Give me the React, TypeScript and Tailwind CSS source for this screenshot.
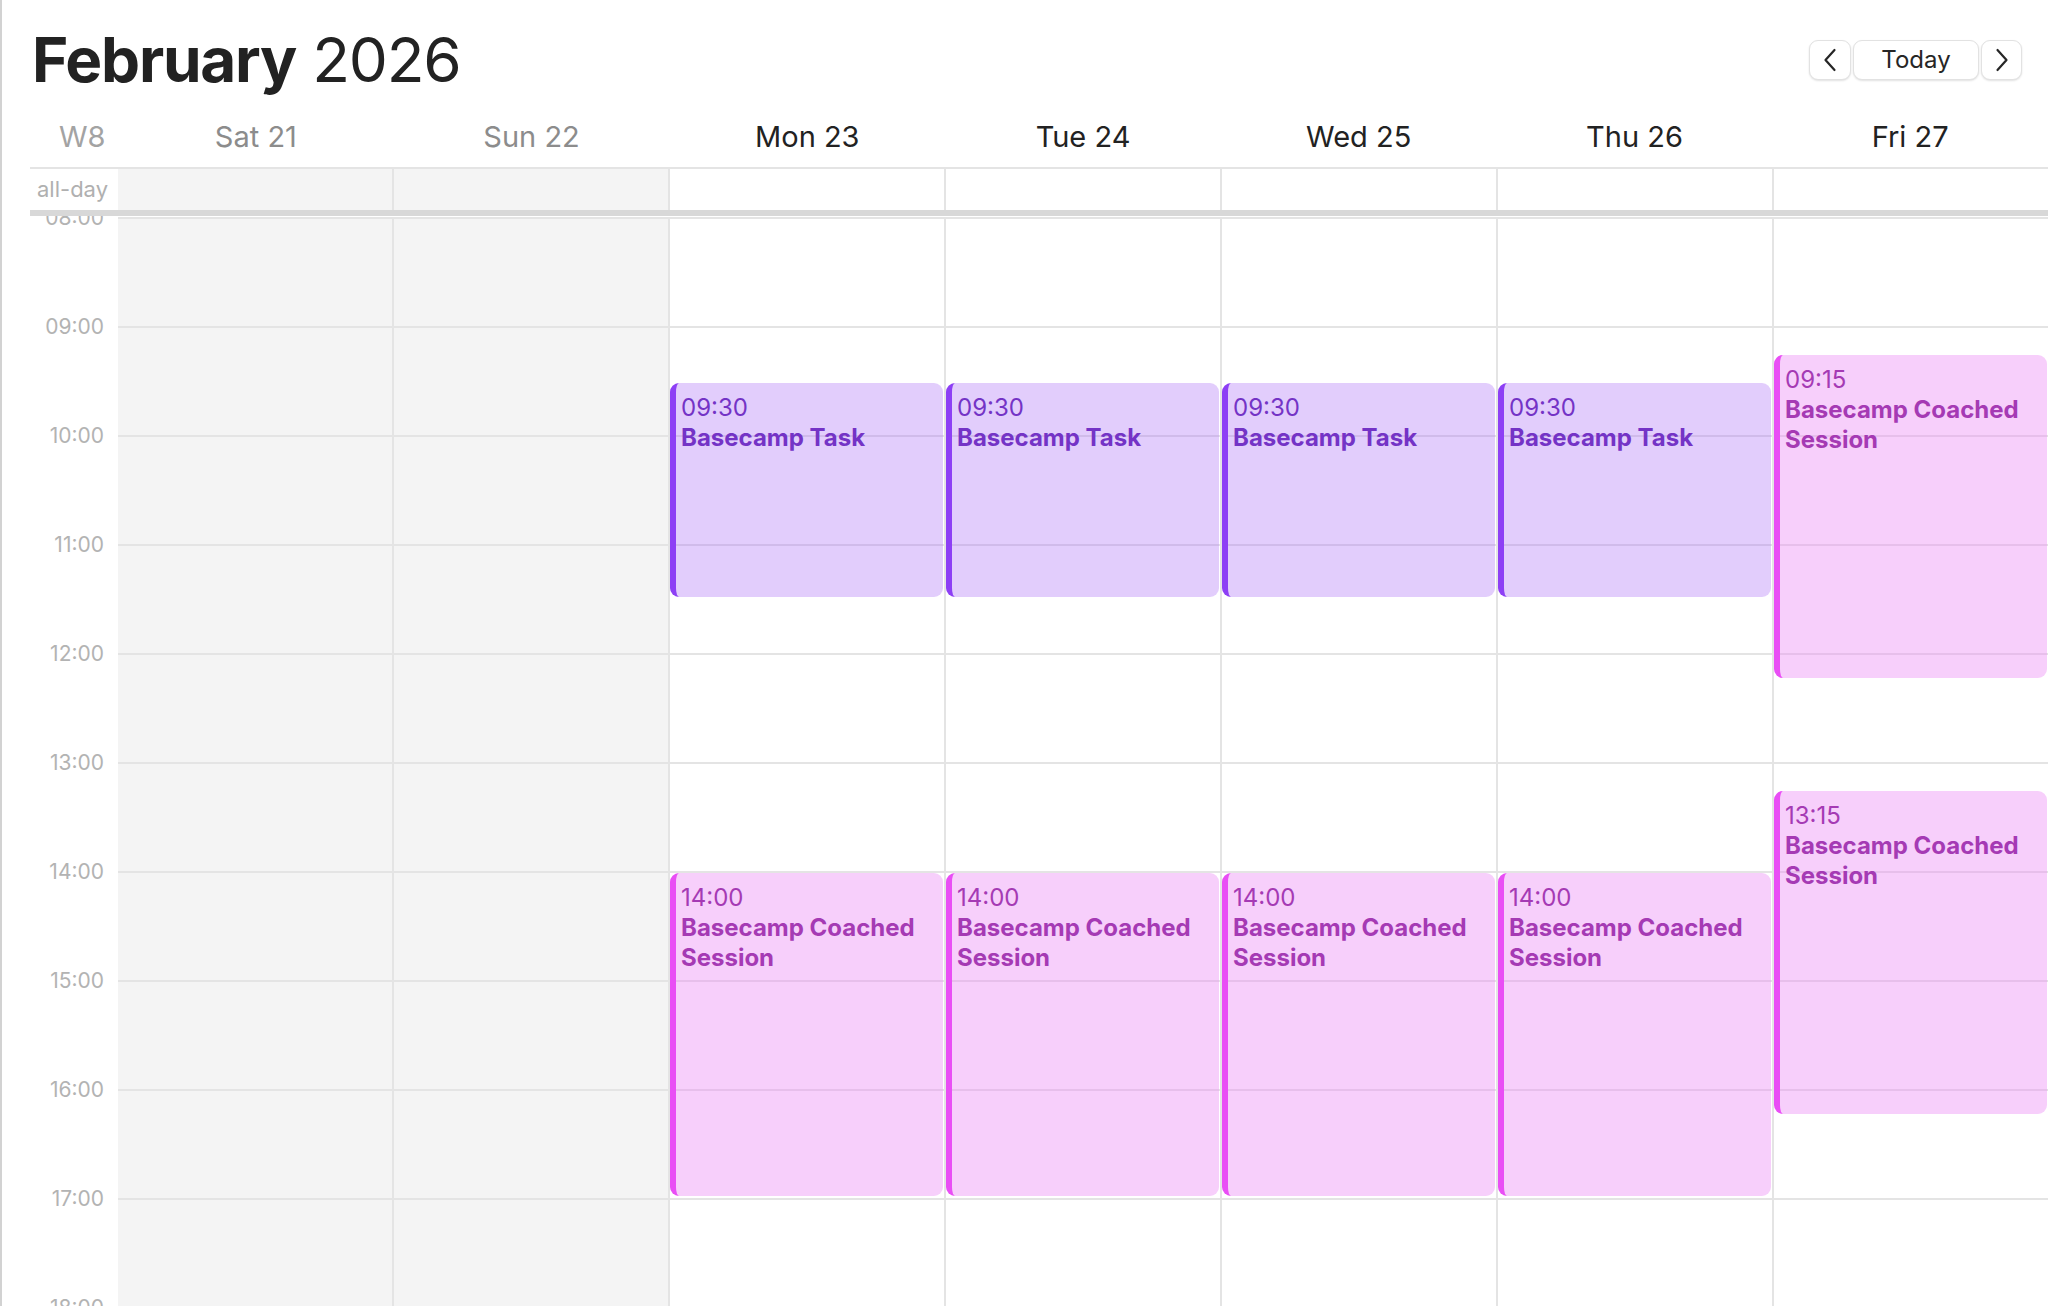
import React from 'react';

type CalEvent = { start: number; end: number; label: string; title: string; kind: 'task' | 'session' };

const HOUR = 109;
const FIRST = 8;
const HOURS = [8, 9, 10, 11, 12, 13, 14, 15, 16, 17, 18];

const task = (): CalEvent => ({ start: 9.5, end: 11.5, label: '09:30', title: 'Basecamp Task', kind: 'task' });
const session = (start: number, label: string): CalEvent => ({
  start,
  end: start + 3,
  label,
  title: 'Basecamp Coached Session',
  kind: 'session',
});

const days = [
  { name: 'Sat 21', weekend: true, events: [] as CalEvent[] },
  { name: 'Sun 22', weekend: true, events: [] as CalEvent[] },
  { name: 'Mon 23', weekend: false, events: [task(), session(14, '14:00')] },
  { name: 'Tue 24', weekend: false, events: [task(), session(14, '14:00')] },
  { name: 'Wed 25', weekend: false, events: [task(), session(14, '14:00')] },
  { name: 'Thu 26', weekend: false, events: [task(), session(14, '14:00')] },
  { name: 'Fri 27', weekend: false, events: [session(9.25, '09:15'), session(13.25, '13:15')] },
];

const tone = {
  task: 'bg-[#ad70f5]/35 border-[#8d3ff5] text-[#7433c6]',
  session: 'bg-[#ec8cf6]/42 border-[#e94ef5] text-[#a53ab4]',
};

const EventBlock: React.FC<{ ev: CalEvent }> = ({ ev }) => {
  const top = (ev.start - FIRST) * HOUR + 2;
  const height = (ev.end - ev.start) * HOUR - 4;
  return (
    <div
      className={`absolute left-0 right-[1px] rounded-[9px] border-l-[6px] pl-[5px] pt-[10px] pr-2 text-[24px] leading-[30px] overflow-hidden ${tone[ev.kind]}`}
      style={{ top, height }}
    >
      <div className="font-normal">{ev.label}</div>
      <div className="font-bold">{ev.title}</div>
    </div>
  );
};

const NavButton: React.FC<{ children: React.ReactNode; className?: string }> = ({ children, className }) => (
  <button
    className={`h-[40px] rounded-[9px] border border-[#e2e2e2] bg-white shadow-[0_1px_2px_rgba(0,0,0,0.12)] flex items-center justify-center text-[#262626] ${className ?? ''}`}
  >
    {children}
  </button>
);

const Chevron: React.FC<{ dir: 'left' | 'right' }> = ({ dir }) => (
  <svg width="14" height="24" viewBox="0 0 14 24" fill="none" stroke="#262626" strokeWidth="2.2" strokeLinecap="round" strokeLinejoin="round">
    {dir === 'left' ? <path d="M11.5 2 L2.5 12 L11.5 22" /> : <path d="M2.5 2 L11.5 12 L2.5 22" />}
  </svg>
);

export default function App() {
  return (
    <div className="w-[2048px] h-[1306px] overflow-hidden bg-white border-l-2 border-[#d2d2d2] font-['Inter','Liberation_Sans',sans-serif] flex flex-col">
      <div className="pl-[28px]">
        <div className="h-[119px] pt-[29px] flex items-start justify-between pr-[26px]">
          <h1 className="text-[62px] leading-[62px] tracking-[-0.02em] text-[#222] pl-[2px]">
            <span className="font-bold">February</span> <span className="font-normal">2026</span>
          </h1>
          <div className="flex gap-[2px] mt-[11px]">
            <NavButton className="w-[42px]">
              <Chevron dir="left" />
            </NavButton>
            <NavButton className="w-[126px] text-[24px]">Today</NavButton>
            <NavButton className="w-[41px]">
              <Chevron dir="right" />
            </NavButton>
          </div>
        </div>

        <div className="flex h-[50px] border-b-2 border-[#e4e4e4]">
          <div className="w-[88px] shrink-0 text-[29px] leading-[36px] text-[#a3a3a3] pl-[29px]">W8</div>
          {days.map(d => (
            <div
              key={d.name}
              className={`flex-1 text-center text-[29px] leading-[36px] ${d.weekend ? 'text-[#8c8c8c]' : 'text-[#222]'}`}
            >
              {d.name}
            </div>
          ))}
        </div>

        <div className="flex h-[41px] border-b-[6px] border-[#d8d8d8] box-content">
          <div className="w-[88px] shrink-0 flex items-center justify-end pr-[10px] text-[22px] text-[#b0b0b0]">all-day</div>
          {days.map((d, i) => (
            <div
              key={d.name}
              className={`flex-1 ${i > 0 ? 'border-l-2 border-[#e4e4e4]' : ''} ${d.weekend ? 'bg-[#f4f4f4]' : 'bg-white'}`}
            />
          ))}
        </div>
      </div>

      <div className="flex-1 overflow-hidden">
        <div className="flex pt-[1px]">
          <div className="w-[116px] shrink-0 relative">
            {HOURS.map(h => (
              <div key={h} className="h-[109px] relative">
                <span className="absolute right-[14px] top-[-12px] text-[21px] leading-[26px] text-[#b3b3b3]">
                  {String(h).padStart(2, '0')}:00
                </span>
              </div>
            ))}
          </div>
          {days.map((d, i) => (
            <div
              key={d.name}
              className={`flex-1 relative ${i > 0 ? 'border-l-2 border-[#e4e4e4]' : ''} ${d.weekend ? 'bg-[#f4f4f4]' : 'bg-white'}`}
            >
              {HOURS.map(h => (
                <div key={h} className="h-[109px] border-t-2 border-[#e4e4e4]" />
              ))}
              {d.events.map((ev, k) => (
                <EventBlock key={k} ev={ev} />
              ))}
            </div>
          ))}
        </div>
      </div>
    </div>
  );
}
